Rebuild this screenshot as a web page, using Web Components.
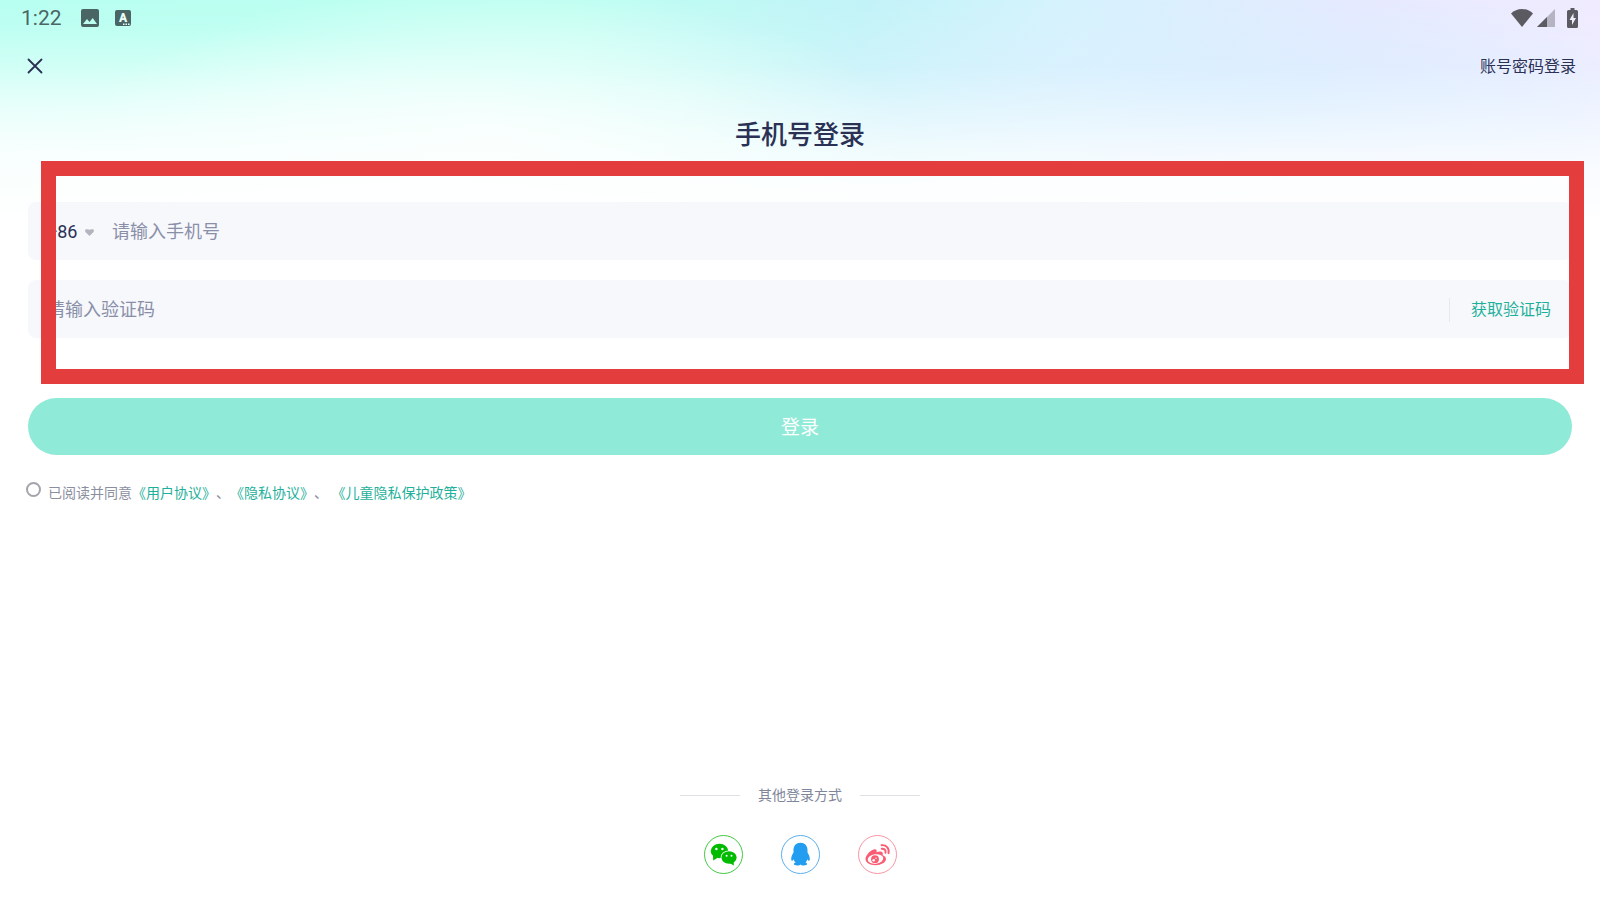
<!DOCTYPE html>
<html lang="zh-CN">
<head>
  <meta charset="UTF-8">
  <meta name="viewport" content="width=device-width, initial-scale=1">
  <title>手机号登录</title>
  <style>
    body {
      margin: 0;
      background: #fff;
      color: #2b3055;
      font-family: Roboto, "Noto Sans CJK SC", sans-serif;
      font-size: 16px;
      text-spacing-trim: space-all;
    }
  </style>
</head>
<body>
  <login-page>
    <status-bar slot="top" time="1:22"></status-bar>
    <nav-bar slot="top">账号密码登录</nav-bar>
    <span slot="title">手机号登录</span>
    <mark-frame>
      <phone-field></phone-field>
      <code-field></code-field>
    </mark-frame>
    <submit-button>登录</submit-button>
    <agreement-line></agreement-line>
    <other-logins slot="bottom">其他登录方式</other-logins>
  </login-page>

  <script>
    class LoginPage extends HTMLElement {
      constructor() {
        super();
        this.attachShadow({ mode: 'open' });
        this.shadowRoot.innerHTML = `
          <style>
            :host {
              display: flex;
              flex-direction: column;
              box-sizing: border-box;
              min-height: 100vh;
              background-image:
                linear-gradient(to bottom, rgba(255, 255, 255, 0) 0%, rgba(255, 255, 255, 0.15) 30%, rgba(255, 255, 255, 0.72) 68%, #fff 100%),
                radial-gradient(ellipse 26% 68% at 31% 62%, rgba(255, 255, 255, 0.75) 0%, rgba(255, 255, 255, 0.45) 50%, rgba(255, 255, 255, 0) 100%),
                radial-gradient(ellipse 40% 62% at 3% 72%, rgba(248, 255, 255, 0.75) 0%, rgba(248, 255, 255, 0.4) 50%, rgba(248, 255, 255, 0) 100%),
                radial-gradient(ellipse 34% 56% at 78% 52%, rgba(206, 234, 255, 0.9) 0%, rgba(206, 234, 255, 0) 100%),
                radial-gradient(ellipse 30% 60% at 100% 90%, rgba(220, 236, 255, 0.9) 0%, rgba(220, 236, 255, 0) 100%),
                linear-gradient(to right, #b8fff1 0%, #bdfff1 36%, #c2f3f8 54%, #d6f3fd 67%, #e6eaff 84%, #f0ebff 100%);
              background-size: 100% 222px;
              background-repeat: no-repeat;
            }
            h1 {
              margin: 20px 0 0;
              font-size: 26px;
              line-height: 38px;
              font-weight: 500;
              text-align: center;
            }
            main {
              padding: 48px 28px 0;
            }
            footer {
              margin-top: auto;
              padding: 40px 0 26px;
            }
          </style>
          <header><slot name="top"></slot></header>
          <h1><slot name="title"></slot></h1>
          <main><slot></slot></main>
          <footer><slot name="bottom"></slot></footer>
        `;
      }
    }
    customElements.define('login-page', LoginPage);

    class StatusBar extends HTMLElement {
      constructor() {
        super();
        this.attachShadow({ mode: 'open' });
        this.shadowRoot.innerHTML = `
          <style>
            :host {
              display: flex;
              align-items: center;
              justify-content: space-between;
              height: 36px;
              padding: 0 22px 0 21px;
              color: #4a6664;
            }
            div {
              display: flex;
              align-items: center;
            }
            time {
              font-size: 21px;
              line-height: 36px;
              margin-right: 19px;
            }
            svg {
              display: block;
              fill: currentColor;
            }
            .apps {
              gap: 16px;
            }
            .system {
              color: #5a5a60;
              gap: 4px;
            }
            .battery {
              margin-left: 8px;
            }
          </style>
          <div>
            <time></time>
            <div class="apps">
              <svg width="18" height="18" viewBox="0 0 18 18"><path fill-rule="evenodd" d="M2 0h14a2 2 0 0 1 2 2v14a2 2 0 0 1-2 2H2a2 2 0 0 1-2-2V2a2 2 0 0 1 2-2zM2 15h14l-4.300-6-3.200 4-2.500-3z"/></svg>
              <svg width="16" height="16" viewBox="0 0 16 16"><rect width="16" height="16" rx="2"/><text x="8" y="12" text-anchor="middle" font-size="12" font-weight="900" fill="#e8fffa">A</text><path d="M8 13.500h1.500V15H8zM10.500 13.500H12V15h-1.500zM13 13.500h1.500V15H13z" fill="#e8fffa"/></svg>
            </div>
          </div>
          <div class="system">
            <svg width="22" height="18" viewBox="0 0 22 18"><path d="M11 18 0 4.500Q4.500 0 11 0t11 4.500z"/></svg>
            <svg width="18" height="18" viewBox="0 0 18 18"><path d="M18 0v18H0z" opacity=".38"/><path d="M10 8v10H0z"/></svg>
            <svg class="battery" width="11" height="20" viewBox="0 0 11 20"><path d="M3.500 0h4v2H9.500A1.500 1.500 0 0 1 11 3.500v15A1.500 1.500 0 0 1 9.500 20h-8A1.500 1.500 0 0 1 0 18.500v-15A1.500 1.500 0 0 1 1.500 2h2z"/><path d="M6.500 5 2.500 12h2.500v5l4-7H6.500z" fill="#f0eeff"/></svg>
          </div>
        `;
      }
      connectedCallback() {
        this.shadowRoot.querySelector('time').textContent = this.getAttribute('time');
      }
    }
    customElements.define('status-bar', StatusBar);

    class NavBar extends HTMLElement {
      constructor() {
        super();
        this.attachShadow({ mode: 'open' });
        this.shadowRoot.innerHTML = `
          <style>
            :host {
              display: flex;
              align-items: center;
              justify-content: space-between;
              height: 60px;
              padding: 0 24px 0 20px;
            }
            button {
              padding: 7px;
              border: 0;
              background: none;
              color: inherit;
            }
            svg {
              display: block;
            }
            a {
              padding-top: 2px;
              color: inherit;
              text-decoration: none;
              line-height: 24px;
            }
          </style>
          <button type="button" aria-label="关闭">
            <svg width="16" height="16" viewBox="0 0 16 16" fill="none" stroke="currentColor" stroke-width="1.800" stroke-linecap="round"><path d="M1.500 1.500l13 13M14.500 1.500l-13 13"/></svg>
          </button>
          <a href="#password"><slot></slot></a>
        `;
      }
    }
    customElements.define('nav-bar', NavBar);

    // red outline drawn on top of the fields
    class MarkFrame extends HTMLElement {
      constructor() {
        super();
        this.attachShadow({ mode: 'open' });
        this.shadowRoot.innerHTML = `
          <style>
            :host {
              display: block;
              position: relative;
            }
            .backdrop, .outline {
              position: absolute;
              inset: -41px -12px -46px 13px;
            }
            .backdrop {
              background: rgba(255, 255, 255, 0.6);
            }
            .outline {
              border: 15px solid #e43d3d;
              pointer-events: none;
            }
            .fields {
              position: relative;
              display: grid;
              gap: 20px;
            }
          </style>
          <div class="backdrop"></div>
          <div class="fields"><slot></slot></div>
          <div class="outline"></div>
        `;
      }
    }
    customElements.define('mark-frame', MarkFrame);

    const fieldStyle = `
      :host {
        display: flex;
        align-items: center;
        box-sizing: border-box;
        height: 58px;
        padding: 2px 21px 0 19px;
        border-radius: 8px;
        background: #f7f8fc;
      }
      input {
        flex: 1;
        min-width: 0;
        padding: 0;
        border: 0;
        outline: 0;
        background: none;
        color: inherit;
        font: inherit;
        font-size: 18px;
        line-height: 28px;
      }
      input::placeholder {
        color: #8a8fa8;
        opacity: 1;
      }
    `;

    class PhoneField extends HTMLElement {
      constructor() {
        super();
        this.attachShadow({ mode: 'open' });
        this.shadowRoot.innerHTML = `
          <style>
            ${fieldStyle}
            select {
              appearance: none;
              width: 32px;
              padding: 0;
              border: 0;
              outline: 0;
              background: none;
              color: inherit;
              font: inherit;
              font-size: 18px;
              line-height: 28px;
            }
            svg {
              margin: 0 18px 0 6px;
              fill: #b3b4bf;
            }
          </style>
          <select aria-label="国家或地区代码">
            <option>+86</option>
            <option>+852</option>
            <option>+853</option>
            <option>+886</option>
          </select>
          <svg width="9" height="7" viewBox="0 0 9 7"><path d="M4.500 7 .4 3Q-.4 1 1 .3 3 0 4.500 .8 6 0 8 .3 9.400 1 8.600 3z"/></svg>
          <input type="tel" aria-label="手机号" placeholder="请输入手机号">
        `;
      }
    }
    customElements.define('phone-field', PhoneField);

    class CodeField extends HTMLElement {
      constructor() {
        super();
        this.attachShadow({ mode: 'open' });
        this.shadowRoot.innerHTML = `
          <style>
            ${fieldStyle}
            button {
              padding: 0 0 0 21px;
              border: 0;
              border-left: 1px solid #e6e8ef;
              background: none;
              color: #1fb09b;
              font: inherit;
              line-height: 24px;
            }
          </style>
          <input type="text" inputmode="numeric" aria-label="验证码" placeholder="请输入验证码">
          <button type="button">获取验证码</button>
        `;
      }
    }
    customElements.define('code-field', CodeField);

    class SubmitButton extends HTMLElement {
      constructor() {
        super();
        this.attachShadow({ mode: 'open' });
        this.shadowRoot.innerHTML = `
          <style>
            :host {
              display: block;
              margin-top: 60px;
            }
            button {
              display: block;
              width: 100%;
              height: 57px;
              padding: 0 0 2px;
              border: 0;
              border-radius: 29px;
              background: #90ead8;
              color: #fff;
              font: inherit;
              font-size: 19px;
            }
          </style>
          <button type="submit"><slot></slot></button>
        `;
      }
    }
    customElements.define('submit-button', SubmitButton);

    class AgreementLine extends HTMLElement {
      constructor() {
        super();
        this.attachShadow({ mode: 'open' });
        this.shadowRoot.innerHTML = `
          <style>
            :host {
              display: flex;
              align-items: flex-start;
              gap: 7px;
              margin: 27px 0 0 -2px;
              color: #8a8f9f;
              font-size: 14px;
              line-height: 22px;
            }
            input {
              appearance: none;
              box-sizing: border-box;
              width: 15px;
              height: 15px;
              margin: 0;
              border: 2px solid #a3a3ab;
              border-radius: 50%;
              background: #fff;
            }
            input:checked {
              background: #1fb09b;
            }
            a {
              color: #1fb09b;
              text-decoration: none;
            }
          </style>
          <input type="checkbox" id="agree">
          <span><label for="agree">已阅读并同意</label><a href="#terms">《用户协议》</a>、<a href="#privacy">《隐私协议》</a>、 <a href="#children">《儿童隐私保护政策》</a></span>
        `;
      }
    }
    customElements.define('agreement-line', AgreementLine);

    class OtherLogins extends HTMLElement {
      constructor() {
        super();
        this.attachShadow({ mode: 'open' });
        this.shadowRoot.innerHTML = `
          <style>
            :host {
              display: flex;
              flex-direction: column;
              align-items: center;
              gap: 30px;
              color: #80869a;
              font-size: 14px;
              line-height: 20px;
            }
            .caption {
              display: flex;
              align-items: center;
              gap: 18px;
            }
            .caption::before, .caption::after {
              content: "";
              width: 60px;
              height: 1px;
              background: #dfe1e5;
            }
            nav {
              display: flex;
              gap: 38px;
            }
            svg {
              display: block;
            }
          </style>
          <div class="caption"><slot></slot></div>
          <nav>
            <a href="#wechat" aria-label="微信">
              <svg width="39" height="39" viewBox="0 0 39 39">
                <circle cx="19.500" cy="19.500" r="19" fill="#fff" stroke="#2fc22f" stroke-width=".9"/>
                <path d="M9 20.500 9.200 25.500 14 22.500z" fill="#0b0"/>
                <ellipse cx="15.500" cy="16" rx="8.800" ry="7.200" fill="#0b0"/>
                <ellipse cx="25" cy="22.500" rx="8.300" ry="6.900" fill="#fff"/>
                <path d="M25.500 28 29.800 30.500 29.600 26z" fill="#0b0"/>
                <ellipse cx="25" cy="22.500" rx="7.600" ry="6.200" fill="#0b0"/>
                <g fill="#fff"><circle cx="12.400" cy="14" r="1.200"/><circle cx="18.400" cy="14" r="1.200"/><circle cx="22.600" cy="20.800" r="1"/><circle cx="27.500" cy="20.800" r="1"/></g>
              </svg>
            </a>
            <a href="#qq" aria-label="QQ">
              <svg width="39" height="39" viewBox="0 0 39 39">
                <circle cx="19.500" cy="19.500" r="19" fill="#fff" stroke="#4aa5e8" stroke-width=".9"/>
                <path d="M19.500 7.700c4.500 0 7 3.200 7 7.300v2.500c1.200 1.800 2.300 4.200 2.300 6.300 0 1.600-.5 2.200-1 2-.7-.2-1.200-1-1.500-1.600-.3 1.400-.9 2.500-1.900 3.400 1.100.4 1.700.9 1.700 1.500 0 1-1.500 1.400-3.400 1.400-1.400 0-2.500-.5-3.200-1.100-.7.600-1.800 1.100-3.200 1.100-1.900 0-3.400-.4-3.400-1.400 0-.6.600-1.100 1.700-1.500-1-.9-1.600-2-1.900-3.400-.3.600-.8 1.400-1.500 1.600-.5.200-1-.4-1-2 0-2.100 1.100-4.500 2.300-6.300V15c0-4.100 2.500-7.300 7-7.300z" fill="#229df0"/>
              </svg>
            </a>
            <a href="#weibo" aria-label="微博">
              <svg width="39" height="39" viewBox="0 0 39 39">
                <circle cx="19.500" cy="19.500" r="19" fill="#fff" stroke="#f58a99" stroke-width=".9"/>
                <path d="M17 14.300c1.500 0 2 1.200 1.500 3 2.700-1.100 5-1.300 6 .1.500.8.400 1.800 0 2.900 2.200.7 3.500 1.900 3.500 3.700 0 3.300-4.700 6.200-10.500 6.200S7.500 27.600 7.500 24c0-4 6-9.700 9.500-9.700z" fill="#fa5d73"/>
                <ellipse cx="17.500" cy="24" rx="7.800" ry="4.700" fill="#fff" transform="rotate(-7 17.500 24)"/>
                <circle cx="17" cy="24.200" r="3.900" fill="#fa5d73"/>
                <circle cx="15.700" cy="25.200" r="1.300" fill="#fff"/><circle cx="18" cy="23.300" r=".7" fill="#fff"/>
                <path d="M23.500 10.200c4.500-.8 8.200 3.200 7 8M23.800 13.800c2.500-.4 4.300 1.600 3.700 4" fill="none" stroke="#fa5d73" stroke-width="1.900" stroke-linecap="round"/>
              </svg>
            </a>
          </nav>
        `;
      }
    }
    customElements.define('other-logins', OtherLogins);
  </script>
</body>
</html>
